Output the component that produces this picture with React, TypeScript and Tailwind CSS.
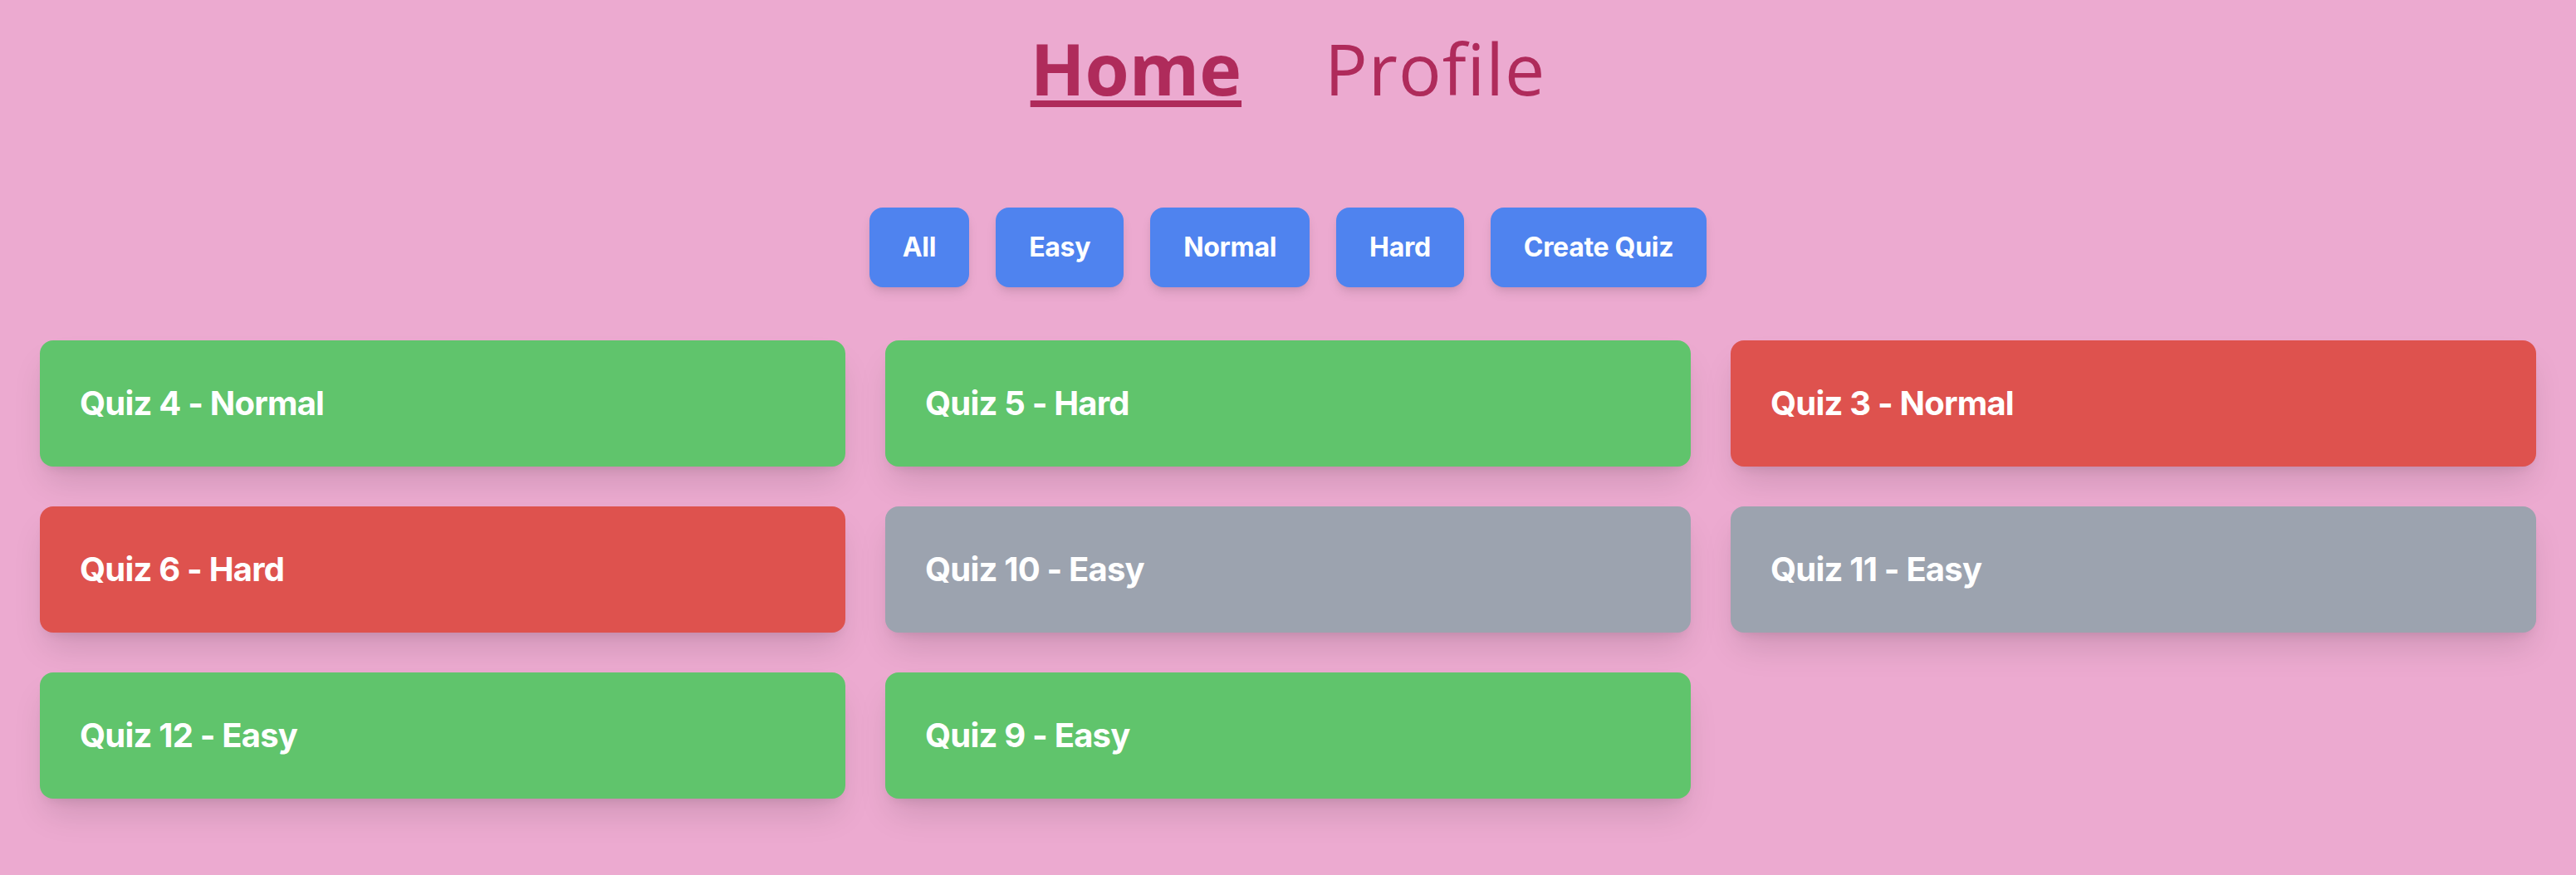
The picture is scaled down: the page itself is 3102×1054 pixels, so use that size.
const filters = ['All', 'Easy', 'Normal', 'Hard', 'Create Quiz']

type Quiz = { id: number; level: string; tone: 'green' | 'red' | 'gray' }

const quizzes: Quiz[] = [
  { id: 4, level: 'Normal', tone: 'green' },
  { id: 5, level: 'Hard', tone: 'green' },
  { id: 3, level: 'Normal', tone: 'red' },
  { id: 6, level: 'Hard', tone: 'red' },
  { id: 10, level: 'Easy', tone: 'gray' },
  { id: 11, level: 'Easy', tone: 'gray' },
  { id: 12, level: 'Easy', tone: 'green' },
  { id: 9, level: 'Easy', tone: 'green' },
]

const toneClass = {
  green: 'bg-[#60c46c]',
  red: 'bg-[#de524e]',
  gray: 'bg-[#9ca3af]',
}

export default function App() {
  return (
    <div className="min-h-screen bg-[#ecaad0] font-['Inter',sans-serif] pb-[92px]">
      <nav className="flex justify-center gap-[100px] pt-[39px] font-['Open_Sans',sans-serif] text-[86px] leading-none text-[#af2b5b]">
        <a className="font-bold underline decoration-[8px] underline-offset-[6px]">Home</a>
        <a className="tracking-[1px]">Profile</a>
      </nav>

      <div className="mt-[125px] flex justify-center gap-8">
        {filters.map((f) => (
          <button
            key={f}
            className="rounded-2xl bg-[#4f83ef] px-10 py-6 text-[32px] font-bold leading-[48px] tracking-[-0.3px] text-white shadow-[0_8px_14px_-2px_rgba(0,0,0,0.1),0_4px_8px_-4px_rgba(0,0,0,0.1)]"
          >
            {f}
          </button>
        ))}
      </div>

      <div className="mt-16 grid grid-cols-3 gap-12 px-12">
        {quizzes.map((q) => (
          <div
            key={q.id}
            className={`${toneClass[q.tone]} rounded-2xl px-12 py-12 text-[40px] font-bold leading-[56px] tracking-[-0.8px] text-white shadow-[0_24px_40px_-8px_rgba(0,0,0,0.13),0_8px_14px_-8px_rgba(0,0,0,0.12)]`}
          >
            Quiz {q.id} - {q.level}
          </div>
        ))}
      </div>
    </div>
  )
}
